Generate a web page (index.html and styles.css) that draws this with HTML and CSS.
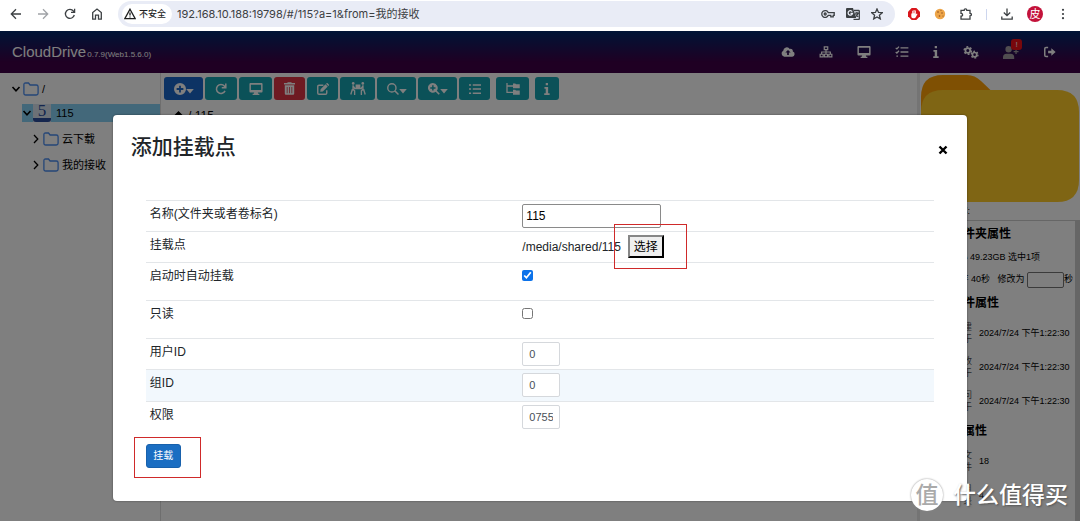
FILE: index.html
```html
<!DOCTYPE html>
<html lang="zh-CN">
<head>
<meta charset="utf-8">
<meta name="viewport" content="width=device-width, initial-scale=1">
<title>CloudDrive</title>
<link rel="stylesheet" href="styles.css">
</head>
<body>
<svg class="defs" aria-hidden="true">
  <symbol id="desktop" viewBox="0 0 18 16"><path fill="currentColor" fill-rule="evenodd" d="M1.6 0h14.8Q18 0 18 1.6v9.3q0 1.6-1.6 1.6h-5l.6 1.9h1.5V16h-9v-1.6H6l.6-1.9h-5Q0 12.500 0 10.900V1.600Q0 0 1.600 0zM2.200 2.200v7.200h13.600V2.200z"/></symbol>
  <symbol id="info" viewBox="0 0 8 16"><path fill="currentColor" d="M2.300 0h3v3h-3zM.6 5.400h4.900v8.200H7.500V16H.3v-2.400h2V7.800H.6z"/></symbol>
  <symbol id="folder" viewBox="0 0 16 14"><path fill="none" stroke="currentColor" stroke-width="1.300" d="M.9 2.600Q.9 1 2.500 1h3l1.600 2h6.200q1.800 0 1.800 1.700v6.600q0 1.700-1.800 1.700H2.700Q.9 13 .9 11.300z"/></symbol>
  <symbol id="caret" viewBox="0 0 8 5"><path fill="currentColor" d="M.2 0h7.600L4 4.600z"/></symbol>
  <symbol id="down" viewBox="0 0 10 10"><path fill="none" stroke="currentColor" stroke-width="1.600" d="M1.500 3 5 6.800 8.500 3"/></symbol>
  <symbol id="right" viewBox="0 0 10 10"><path fill="none" stroke="currentColor" stroke-width="1.300" d="M3 1l3.800 4L3 9"/></symbol>
</svg>

<header class="browser">
  <nav class="nav">
    <button aria-label="后退"><svg viewBox="0 0 12 12"><path d="M11 6H1.500M6 1.300 1.300 6 6 10.700"/></svg></button>
    <button class="off" aria-label="前进"><svg viewBox="0 0 12 12"><path d="M1 6h9.500M6 1.300 10.700 6 6 10.700"/></svg></button>
    <button aria-label="刷新"><svg viewBox="0 0 12 12"><path d="M10.300 7A4.500 4.500 0 1 1 9.500 3.100L10.500 4.300M10.600.8v3.600H7"/></svg></button>
    <button aria-label="主页"><svg viewBox="0 0 12 12"><path d="M1.700 11.200V4.600L6 1l4.300 3.600v6.600H7.500V7.200h-3v4z"/></svg></button>
  </nav>
  <div class="omnibox">
    <span class="chip"><svg viewBox="0 0 12 12"><path d="M6 1.200 11.200 10.700H.8zM6 4.600v3M6 8.400v1.200"/></svg>不安全</span>
    <label class="url"><input type="text" aria-label="网址" value="192.168.10.188:19798/#/115?a=1&amp;from=我的接收"></label>
    <button aria-label="密码"><svg class="wide" viewBox="0 0 14 12"><path d="M7.300 4.700h5.900v2.600h-1v1.500H9.800V7.300H7.300A3.400 3.400 0 1 1 7.300 4.700z"/><circle cx="4.200" cy="6" r="1"/></svg></button>
    <button aria-label="翻译"><svg class="wide" viewBox="0 0 14 12"><path class="solid" d="M1 0h6l3.200 10H1Q0 10 0 9V1q0-1 1-1z"/><path d="M8 2.500h4.500q.8 0 .8.800v7.400q0 .8-.8.800H7.500M8.800 5.200h4M10.900 4v1.200M9.400 8.800q2-1.200 2.600-3.400M9.500 6.300l2.600 2.600"/><path class="light" d="M6.200 3.700A2.200 2.200 0 1 0 6.500 5.400H4.500"/></svg></button>
    <button aria-label="收藏"><svg viewBox="0 0 12 12"><path d="m6 .9 1.500 3.500 3.800.3-2.900 2.500.9 3.700L6 8.900l-3.300 2 .9-3.700L.7 4.700l3.800-.3z"/></svg></button>
  </div>
  <div class="extras">
    <button aria-label="广告拦截"><svg viewBox="0 0 12 12"><path fill="#d9161c" stroke="none" d="M3.700 0h4.600L12 3.700v4.600L8.300 12H3.700L0 8.300V3.700z"/><path fill="#fff" stroke="none" d="M3.300 5.500h1V2.700h.9v2.600h.4V1.900h.9v3.400h.4V2.500h.9v4l1-.9.700.5-1.900 3.300q-.4.800-1.400.8H5q-1.700 0-1.700-1.700z"/></svg></button>
    <button aria-label="Cookie"><svg viewBox="0 0 12 12"><circle cx="6" cy="6" r="5.200" fill="#eda548" stroke="none"/><g fill="#8a4a1c" stroke="none"><circle cx="4" cy="4" r=".8"/><circle cx="8" cy="5" r=".7"/><circle cx="5.500" cy="8" r=".8"/><circle cx="9" cy="8" r=".6"/><circle cx="7" cy="2.500" r=".5"/></g></svg></button>
    <button aria-label="扩展程序"><svg viewBox="0 0 12 12"><path d="M1 2.300h3.200q0-1.500 1.300-1.500t1.300 1.500H10v3q1.400 0 1.400 1.300T10 7.900v3.300H1V8.100q1.600 0 1.600-1.400T1 5.300z"/></svg></button>
    <span class="divider"></span>
    <button aria-label="下载"><svg viewBox="0 0 12 12"><path d="M6 .5v7M2.800 4.500 6 7.700l3.200-3.200M.8 8.500v2.700h10.400V8.500"/></svg></button>
    <button class="avatar">皮</button>
    <button aria-label="菜单"><svg viewBox="0 0 12 12"><g class="solid"><circle cx="6" cy="1.800" r="1.100"/><circle cx="6" cy="6" r="1.100"/><circle cx="6" cy="10.200" r="1.100"/></g></svg></button>
  </div>
</header>

<main class="app">
  <header class="topbar">
    <h1 class="brand">CloudDrive<small>0.7.9(Web1.5.6.0)</small></h1>
    <nav class="topnav">
      <button aria-label="上传"><svg viewBox="0 0 18 14"><path fill="currentColor" fill-rule="evenodd" d="M4.200 13A4 4 0 0 1 2.900 5.500 4.600 4.600 0 0 1 11.300 3a3 3 0 0 1 3.900 3.400A3.400 3.400 0 0 1 14.500 13zM9 4.300 5.600 7.800h2.300v3h2.200v-3h2.300z"/></svg></button>
      <button aria-label="网络"><svg viewBox="0 0 18 16"><path fill="none" stroke="currentColor" stroke-width="1.600" d="M6.700 1.200h4.600v3.600H6.700zM1.200 11h4v3.400h-4zM7 11h4v3.400H7zM12.800 11h4v3.400h-4zM9 5v6M3.200 11V8h11.600v3"/></svg></button>
      <button aria-label="设备"><svg viewBox="0 0 18 16"><use href="#desktop"/></svg></button>
      <button aria-label="任务"><svg viewBox="0 0 18 16"><path fill="none" stroke="currentColor" stroke-width="1.700" d="M7 2.600h10.500M7 8h10.500M7 13.400h10.500M.6 2.500l1.600 1.400L5 .8M.6 8l1.600 1.400L5 6.300M1.500 13.400h2.200"/></svg></button>
      <button aria-label="关于"><svg class="thin" viewBox="0 0 8 16"><use href="#info"/></svg></button>
      <button aria-label="设置"><svg class="big" viewBox="0 0 20 16"><g fill="none" stroke="currentColor"><circle cx="6" cy="5.500" r="3" stroke-width="2.200"/><circle cx="6" cy="5.500" r="4.600" stroke-width="1.800" stroke-dasharray="2.400 2.417"/><circle cx="14.500" cy="10.700" r="2.700" stroke-width="2.100"/><circle cx="14.500" cy="10.700" r="4.200" stroke-width="1.700" stroke-dasharray="2.200 2.198"/></g></svg></button>
      <button class="user" aria-label="用户"><svg class="big" viewBox="0 0 20 16"><path fill="currentColor" d="M7 0a4 4 0 0 1 0 8 4 4 0 0 1 0-8zM0 16v-2q0-4.500 4.500-4.500h5Q14 9.500 14 14v2zM15.500 4h1.600v2.200h2.300v1.600h-2.300V10h-1.600V7.800h-2.200V6.200h2.200z"/></svg><span class="alert">!</span></button>
      <button aria-label="退出"><svg viewBox="0 0 18 16"><path fill="none" stroke="currentColor" stroke-width="2" d="M6.500 2H3.700Q2 2 2 3.700v8.600Q2 14 3.700 14h2.800"/><path fill="currentColor" d="M6.500 6.300h4.300V3l5.700 5-5.700 5V9.700H6.500z"/></svg></button>
    </nav>
  </header>

  <div class="columns">
    <aside class="tree">
      <ul>
        <li class="node"><svg class="arrow"><use href="#down"/></svg><svg class="dir"><use href="#folder"/></svg>/</li>
        <li class="node level1 active"><svg class="arrow"><use href="#down"/></svg><span class="logo"><b>5</b><i></i></span>115</li>
        <li class="node level2"><svg class="arrow"><use href="#right"/></svg><svg class="dir"><use href="#folder"/></svg>云下载</li>
        <li class="node level2"><svg class="arrow"><use href="#right"/></svg><svg class="dir"><use href="#folder"/></svg>我的接收</li>
      </ul>
    </aside>

    <section class="content">
      <div class="toolbar">
        <button class="tool add" aria-label="添加"><svg viewBox="0 0 16 16"><path fill="currentColor" fill-rule="evenodd" d="M8 0a8 8 0 0 1 0 16A8 8 0 0 1 8 0zM6.800 3.500v3.300H3.500v2.400h3.300v3.300h2.400V9.200h3.300V6.800H9.200V3.500z"/></svg><svg class="caret"><use href="#caret"/></svg></button>
        <button class="tool" aria-label="刷新"><svg viewBox="0 0 16 16"><path fill="none" stroke="currentColor" stroke-width="2" d="M13.400 10.500A6 6 0 1 1 12.500 4l1.500 2M14.400.8v5.400H9"/></svg></button>
        <button class="tool broad" aria-label="挂载"><svg class="wide" viewBox="0 0 18 16"><use href="#desktop"/></svg></button>
        <button class="tool danger" aria-label="删除"><svg class="bin" viewBox="0 0 14 16"><path fill="currentColor" fill-rule="evenodd" d="M0 1h4l.8-1h4.400l.8 1h4v2H0zM1 4h12v10.500q0 1.500-1.500 1.500h-9Q1 16 1 14.500zM3.500 6v8h1V6zM6.500 6v8h1V6zM9.500 6v8h1V6z"/></svg></button>
        <button class="tool narrow" aria-label="重命名"><svg viewBox="0 0 16 16"><path fill="none" stroke="currentColor" stroke-width="1.900" d="M8.500 3H2.700Q1 3 1 4.700v8.600Q1 15 2.700 15h8.600q1.700 0 1.700-1.700V9.500"/><path fill="currentColor" d="m11.300 1.800 3 3-6.500 6.500-3.500.5.500-3.500zM12 1.100l.8-.8q.7-.6 1.400 0l1.600 1.600q.6.700 0 1.400l-.8.8z"/></svg></button>
        <button class="tool move" aria-label="移动"><svg class="carry" viewBox="0 0 20 16"><g fill="currentColor"><circle cx="4" cy="1.700" r="1.700"/><circle cx="16" cy="1.700" r="1.700"/><path d="M7 3h6v5H7z"/></g><path fill="none" stroke="currentColor" stroke-width="1.700" d="M3.800 4v5l2 2v5M3 9l-2 6.500M4 5l2 3h8l2-3M16.200 4v5l-2 2v5M17 9l2 6.500"/></svg></button>
        <button class="tool menu" aria-label="搜索"><svg viewBox="0 0 16 16"><path fill="none" stroke="currentColor" stroke-width="1.900" d="M6.500 1a5.500 5.500 0 0 1 0 11 5.500 5.500 0 0 1 0-11zM10.500 10.500 15.300 15.300"/></svg><svg class="caret"><use href="#caret"/></svg></button>
        <button class="tool menu" aria-label="高级搜索"><svg viewBox="0 0 16 16"><path fill="currentColor" fill-rule="evenodd" d="M6.500 0a6.500 6.500 0 0 1 5.300 10.200l4 4-1.600 1.600-4-4A6.500 6.500 0 1 1 6.500 0zM5.500 3v2.500H3v2h2.500V10h2V7.500H10v-2H7.500V3z"/></svg><svg class="caret"><use href="#caret"/></svg></button>
        <button class="tool narrow" aria-label="列表"><svg viewBox="0 0 16 16"><path fill="none" stroke="currentColor" stroke-width="2" d="M5 2.500h11M5 8h11M5 13.500h11M0 2.500h2.800M0 8h2.800M0 13.500h2.800"/></svg></button>
        <button class="tool broad apart" aria-label="树形"><svg class="wide" viewBox="0 0 18 16"><path fill="none" stroke="currentColor" stroke-width="1.700" d="M1 0v12.500h8M1 4h8"/><path fill="currentColor" d="M9 .5h3l1 1h5V7H9zM9 9h3l1 1h5v5.500H9z"/></svg></button>
        <button class="tool apart slim" aria-label="信息"><svg class="thin" viewBox="0 0 8 16"><use href="#info"/></svg></button>
      </div>
      <p class="crumbs"><svg viewBox="0 0 12 12"><path fill="currentColor" d="M6 0l6 6h-1.800v6H1.800V6H0z"/></svg>/ 115</p>
    </section>

    <aside class="details">
      <svg class="cover" viewBox="0 0 158 127"><path fill="#ffa007" d="M0 40V22Q0 0 22 0h24q8 0 14 6l22 21z"/><path fill="#ffca28" d="M22 15h114q22 0 22 22v68q0 22-22 22H22Q0 127 0 105V37q0-22 22-22z"/></svg>
      <p class="name">名称:</p>
      <div class="props">
        <h2>文件夹属性</h2>
        <p>大小 49.23GB 选中1项</p>
        <p><label>缓存 40秒 &nbsp; 修改为 <input type="text"></label>秒</p>
        <h2>文件属性</h2>
        <dl>
          <dt>创建<br>于</dt><dd>2024/7/24 下午1:22:30</dd>
          <dt>修改<br>于</dt><dd>2024/7/24 下午1:22:30</dd>
          <dt>访问<br>于</dt><dd>2024/7/24 下午1:22:30</dd>
        </dl>
        <h2>夹属性</h2>
        <dl>
          <dt>子文<br>件</dt><dd>18</dd>
          <dt>子目<br>录</dt><dd>4</dd>
        </dl>
      </div>
    </aside>
  </div>

  <div class="overlay">
    <form class="modal" role="dialog" aria-labelledby="title">
      <div class="modal-head">
        <h2 id="title">添加挂载点</h2>
        <button type="button" class="close" aria-label="关闭"><svg viewBox="0 0 10 10"><path d="M1.500 1.500l7 7M8.500 1.500l-7 7"/></svg></button>
      </div>
      <table>
        <tr><th><label for="vol">名称(文件夹或者卷标名)</label></th><td><input id="vol" class="vol" type="text" value="115"></td></tr>
        <tr><th>挂载点</th><td><div class="path">/media/shared/115<span class="marked"><button type="button" class="pick">选择</button></span></div></td></tr>
        <tr class="tall"><th><label for="auto">启动时自动挂载</label></th><td><input id="auto" type="checkbox" checked></td></tr>
        <tr class="tall"><th><label for="ro">只读</label></th><td><input id="ro" type="checkbox"></td></tr>
        <tr><th><label for="uid">用户ID</label></th><td><input id="uid" class="num" type="text" value="0"></td></tr>
        <tr class="hover"><th><label for="gid">组ID</label></th><td><input id="gid" class="num" type="text" value="0"></td></tr>
        <tr><th><label for="perm">权限</label></th><td><input id="perm" class="num" type="text" value="0755"></td></tr>
      </table>
      <span class="marked submit"><button type="button" class="mount">挂载</button></span>
    </form>
  </div>
</main>

<div class="watermark"><span class="seal">值</span><span>什么值得买</span></div>
</body>
</html>
```

FILE: styles.css
```css
* { box-sizing: border-box; }

body {
  margin: 0;
  height: 100vh;
  display: flex;
  flex-direction: column;
  overflow: hidden;
  background: #fff;
  color: #000;
  font: 12px/18px "Liberation Sans", "Noto Sans CJK SC", sans-serif;
}

h1, h2, p, ul, dl, dd { margin: 0; padding: 0; }
ul { list-style: none; }
button, input { font: inherit; color: inherit; margin: 0; }
button { padding: 0; border: 0; background: none; display: inline-flex; align-items: center; justify-content: center; }
svg { display: block; flex: none; }
.defs { position: absolute; width: 0; height: 0; }

/* Browser bar */
.browser {
  flex: none;
  height: 31px;
  padding: 1px 11px 4px 10px;
  display: flex;
  align-items: center;
  color: #3c4043;
}
.browser svg { width: 12px; height: 12px; fill: none; stroke: currentColor; stroke-width: 1.3; }
.browser svg.wide { width: 14px; }
.browser .solid { fill: currentColor; stroke: none; }
.browser .light { stroke: #eaedf6; }
.nav { display: flex; gap: 15px; margin-right: 15px; }
.nav .off { color: #a0a3a7; }
.omnibox {
  flex: 1;
  height: 26px;
  display: flex;
  align-items: center;
  gap: 11px;
  padding: 0 12px 0 4px;
  border-radius: 13px;
  background: #e9ecf6;
}
.chip {
  height: 20px;
  display: flex;
  align-items: center;
  gap: 3px;
  padding: 0 6px 0 2px;
  border-radius: 10px;
  background: #fff;
  color: #1f1f1f;
  font-size: 9px;
  font-weight: 500;
}
.url { flex: 1; margin-left: -6px; }
.url input {
  width: 100%;
  padding: 0;
  border: 0;
  background: none;
  font: 11px/18px Inter, "Noto Sans CJK SC", sans-serif;
}
.extras { display: flex; align-items: center; gap: 14px; margin-left: 13px; }
.divider { width: 1px; height: 11px; background: #cdd6ee; }
.avatar {
  width: 16px;
  height: 16px;
  border-radius: 50%;
  background: #c3123a;
  color: #fff;
  font-size: 11px;
}

/* Application */
.app { flex: 1; min-height: 0; position: relative; display: flex; flex-direction: column; }
.topbar {
  flex: none;
  height: 42px;
  padding: 0 23px 0 12px;
  display: flex;
  align-items: center;
  justify-content: space-between;
  background: linear-gradient(#00286c 0%, #3e0046 75%);
  color: #fff;
}
.brand { font-size: 15px; font-weight: 400; line-height: 24px; padding-top: 2px; }
.brand small { margin-left: 1px; font-size: 8px; }
.topnav { display: flex; align-items: center; gap: 24px; }
.topnav svg { width: 14px; height: 12px; }
.topnav svg.big { width: 16px; height: 13px; }
.topnav svg.thin { width: 6px; }
.user { position: relative; color: #a09aa0; }
.alert {
  position: absolute;
  top: -7px;
  right: -3px;
  width: 11px;
  border-radius: 3px;
  background: #f01018;
  color: #fff;
  font-size: 8px;
  line-height: 11px;
}

.columns { flex: 1; min-height: 0; display: grid; grid-template-columns: 161px 1fr 160px; }
.tree { padding: 3px 0 0; border-right: 1px solid #ddd; font-size: 11px; }
.node { height: 18px; margin-bottom: 8px; display: flex; align-items: center; padding-left: 11px; }
.node:first-child { height: 26px; margin-bottom: 2px; }
.level1 { margin-left: 22px; padding-left: 0; }
.level2 { padding-left: 31px; }
.active { background: #87d0f5; }
.arrow { width: 10px; height: 10px; }
.dir { width: 16px; height: 14px; margin: 0 3px 0 2px; color: #4a8cf0; }
.logo { width: 18px; height: 18px; margin: 0 5px 0 1px; display: flex; flex-direction: column; align-items: center; background: #d8e2ef; color: #2a4c9c; }
.logo b { font: 17px/14px "Liberation Serif", serif; }
.logo i { width: 100%; height: 4px; background: #2a4c9c; border-radius: 0 0 3px 3px; }

.content { padding: 4px 3px; overflow: hidden; border-right: 3px solid #e8e8e8; }
.toolbar { display: flex; gap: 2px; }
.tool {
  width: 32px;
  height: 23px;
  border-radius: 3px;
  background: #17a2b0;
  color: #fff;
}
.tool svg { width: 12px; height: 12px; }
.tool svg.wide { width: 14px; }
.tool svg.bin { width: 11px; height: 13px; }
.tool svg.carry { width: 16px; height: 13px; }
.tool svg.thin { width: 6px; }
.tool svg.caret { width: 8px; height: 5px; margin-top: 5px; }
.tool.add { width: 39px; background: #1b66c9; }
.tool.menu { width: 39px; }
.tool.broad { width: 33px; }
.tool.narrow { width: 31px; }
.tool.move { width: 35px; }
.tool.danger { width: 31px; background: #dc3545; }
.tool.apart { margin-left: 4px; }
.tool.slim { width: 24px; }
.crumbs { display: flex; align-items: center; gap: 4px; padding: 7px 9px; }
.crumbs svg { width: 11px; height: 11px; }

.details { display: flex; flex-direction: column; min-width: 0; overflow: hidden; font-size: 9px; }
.cover { margin: 2px 1px 0; }
.name { width: 50px; height: 18px; text-align: right; }
.props { flex: 1; padding: 4px 2px 0 0; border-right: 5px solid #ccc; border-top: 1px solid #ccc; text-align: right; white-space: nowrap; overflow: hidden; }
.props h2 { width: 91px; margin-bottom: 5px; font-size: 12px; line-height: 18px; }
.props p { margin-bottom: 4px; }
.props p:nth-of-type(1) { padding-right: 33px; }
.props p:nth-of-type(2) { margin-bottom: 6px; }
.props input { width: 37px; height: 16px; border: 1px solid #777; border-radius: 2px; background: #fff; vertical-align: middle; }
.props h2:nth-of-type(2) { width: 79px; }
.props h2:nth-of-type(3) { width: 67px; }
dl { display: grid; grid-template-columns: 52px 1fr; column-gap: 7px; text-align: left; margin-bottom: 3px; }
dt { height: 34px; padding-top: 4px; line-height: 12px; text-align: right; color: #555; }
dd { line-height: 33px; }

/* Dialog */
.overlay {
  position: absolute;
  inset: 0;
  padding-top: 84px;
  background: rgba(0, 0, 0, .5);
}
.modal {
  width: 79.1%;
  margin: 0 auto;
  padding: 17px 33px 33px;
  border-radius: 4px;
  background: #fff;
  box-shadow: 0 0 2px rgba(0, 0, 0, .5);
}
.modal-head { display: flex; justify-content: space-between; margin: 0 -18px 38px -15px; }
.modal-head h2 { font-size: 21px; line-height: 30px; font-weight: 500; color: #212529; }
.close { width: 18px; height: 18px; margin-top: 9px; }
.close svg { width: 10px; height: 10px; fill: none; stroke: #000; stroke-width: 2.4; }
table { width: 100%; border-collapse: collapse; table-layout: fixed; color: #212529; }
tr { height: 31px; border-top: 1px solid #e3e6e9; }
.tall { height: 38px; }
.hover { height: 32px; background: #f2f8fd; }
th { width: 47%; padding: 4px; text-align: left; vertical-align: top; font-weight: 400; }
td { padding: 3px 6px; vertical-align: top; }
td input { display: block; background: #fff; }
.vol { width: 139px; height: 24px; padding: 0 3px; border: 1px solid #8a8a8a; border-radius: 2px; color: #000; }
.path { display: flex; align-items: center; gap: 7px; }
.num { width: 38px; height: 24px; padding: 0 6px; border: 1px solid #d5d8dc; border-radius: 2px; color: #495057; font-size: 11px; }
td input[type="checkbox"] { width: 11px; height: 11px; margin-top: 4px; accent-color: #0b72ea; }
.pick { width: 36px; height: 23px; border: 2px outset #333; background: #efefef; color: #000; }
.marked { position: relative; display: inline-block; }
.marked::after { content: ""; position: absolute; inset: -11px -23px -11px -14px; border: 1px solid #cf2a2a; pointer-events: none; }
.submit { margin-top: 11px; }
.submit::after { inset: -7px -20px -10px -12px; }
.mount { width: 35px; height: 24px; border: 1px solid #1861ac; border-radius: 3px; background: #1b6ec2; color: #fff; font-size: 10px; }

.watermark {
  position: absolute;
  right: 12px;
  bottom: 10px;
  display: flex;
  align-items: center;
  gap: 10px;
  color: #fff;
  font-size: 23px;
  line-height: 32px;
  font-weight: 500;
  text-shadow: 1px 1px 2px #555;
}
.seal { width: 32px; height: 32px; border-radius: 50%; background: #fff; color: #aaa; text-align: center; text-shadow: none; box-shadow: 0 0 2px #888; }
```
